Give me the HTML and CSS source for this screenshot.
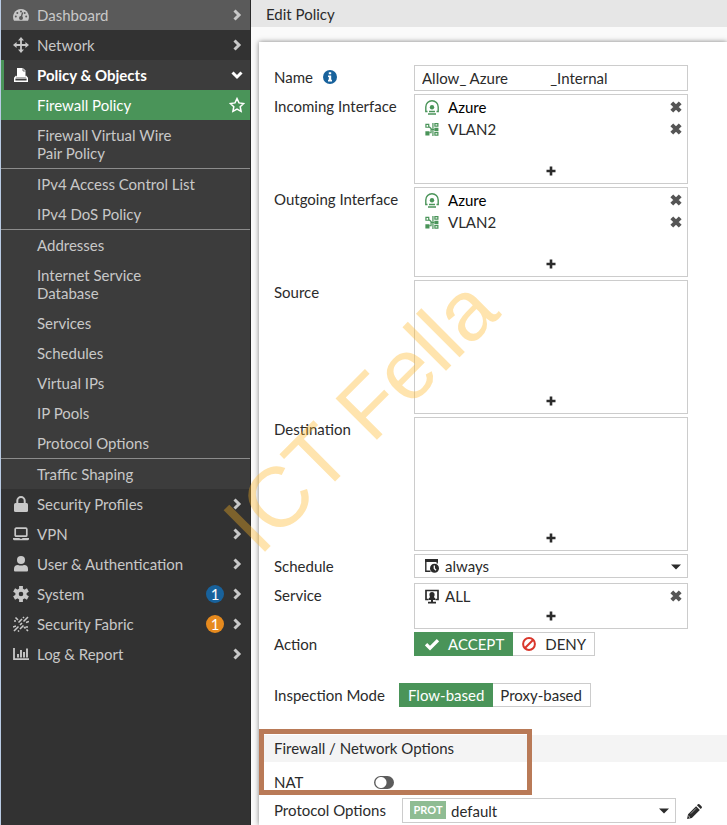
FILE: index.html
```html
<!DOCTYPE html>
<html lang="en">
<head>
<meta charset="utf-8">
<meta name="viewport" content="width=device-width, initial-scale=1">
<title>Edit Policy</title>
<link rel="stylesheet" href="styles.css">
</head>
<body>
<svg class="defs" aria-hidden="true">
  <symbol id="chevron" viewBox="0 0 10 12"><path d="M2.5 1.500 7 6l-4.500 4.500" fill="none" stroke="currentColor" stroke-width="3"/></symbol>
  <symbol id="chevron-down" viewBox="0 0 12 10"><path d="M1.500 2.500 6 7l4.500-4.500" fill="none" stroke="currentColor" stroke-width="3"/></symbol>
  <symbol id="cross" viewBox="0 0 12 12"><path d="M1.800 1.800l8.400 8.400M10.200 1.800l-8.400 8.400" fill="none" stroke="currentColor" stroke-width="4"/></symbol>
  <symbol id="plus" viewBox="0 0 10 10"><path d="M5 .5v9M.5 5h9" fill="none" stroke="currentColor" stroke-width="2.600"/></symbol>
  <symbol id="caret" viewBox="0 0 10 6"><path d="M0 .5h10L5 5.500z" fill="currentColor"/></symbol>
  <symbol id="tunnel" viewBox="0 0 14 15"><g fill="none" stroke="currentColor" stroke-width="1.400"><path d="M2.500 11.500H.8V7a6.200 6.200 0 0 1 12.400 0v4.500h-1.700"/><path d="M4 11.500h6M3 14h8"/></g><circle cx="7" cy="7.200" r="2.200" fill="currentColor"/></symbol>
  <symbol id="vlan" viewBox="0 0 15 14"><g fill="none" stroke="currentColor" stroke-width="1.300"><path d="M1 1.600h3v3H1zM10.600.8h3.200v2.600h-3.200zM10.600 10.400h3.200V13h-3.200z"/><path d="M4.500 4 7 6.500M4.500 10.500H6.500V7H10M8.500 0v14"/></g><path d="M.4 9h4.400v4.400H.4zM10 5h4.400v4H10z" fill="currentColor"/></symbol>
</svg>

<div class="app">
  <nav class="sidebar" aria-label="Main">
    <a class="item item-hover" href="#">
      <svg class="icon" viewBox="0 0 16 16"><path d="M8 2a8 8 0 0 0-7 11.800h14A8 8 0 0 0 8 2z" fill="currentColor"/><g fill="#5a5a5a"><circle cx="8" cy="4.500" r="1"/><circle cx="4.300" cy="6" r="1"/><circle cx="2.800" cy="9.600" r="1"/><circle cx="11.700" cy="6" r="1"/><circle cx="13.200" cy="9.600" r="1"/><circle cx="8" cy="11" r="2"/></g><path d="M8 11 9.600 5.500" stroke="#5a5a5a" stroke-width="1.300"/></svg>
      <span class="label">Dashboard</span><svg class="chev"><use href="#chevron"/></svg></a>
    <a class="item" href="#">
      <svg class="icon" viewBox="0 0 16 16"><path d="M8 2v12M2 8h12" stroke="currentColor" stroke-width="1.800"/><path d="M8 0l3 3.600H5zM8 16l3-3.600H5zM0 8l3.600-3v6zM16 8l-3.600-3v6z" fill="currentColor"/></svg>
      <span class="label">Network</span><svg class="chev"><use href="#chevron"/></svg></a>
    <div class="group">
      <a class="item item-open" href="#">
        <svg class="icon" viewBox="0 0 16 16"><path d="M4 1h6l2.500 2.500V10H4z" fill="currentColor"/><path d="M10 1v3h2.500" fill="none" stroke="#3c3c3c" stroke-width=".7"/><path d="M3.500 9 1.700 11v3.200h12.600V11L12.500 9" fill="none" stroke="currentColor" stroke-width="1.400"/><path d="M2 11h12" stroke="currentColor" stroke-width="1.200"/></svg>
        <span class="label">Policy &amp; Objects</span><svg class="chev-down"><use href="#chevron-down"/></svg></a>
      <a class="item sub item-current" href="#" aria-current="page"><span class="label">Firewall Policy</span>
        <svg class="icon" viewBox="0 0 16 16"><path d="M8 1.600l2 4.300 4.700.6-3.500 3.200.9 4.700L8 12.100l-4.100 2.300.9-4.700L1.300 6.500 6 5.900z" fill="none" stroke="currentColor" stroke-width="1.500"/></svg></a>
      <a class="item sub" href="#"><span class="label">Firewall Virtual Wire<br>Pair Policy</span></a>
      <a class="item sub ruled" href="#"><span class="label">IPv4 Access Control List</span></a>
      <a class="item sub" href="#"><span class="label">IPv4 DoS Policy</span></a>
      <a class="item sub ruled" href="#"><span class="label">Addresses</span></a>
      <a class="item sub" href="#"><span class="label">Internet Service<br>Database</span></a>
      <a class="item sub" href="#"><span class="label">Services</span></a>
      <a class="item sub" href="#"><span class="label">Schedules</span></a>
      <a class="item sub" href="#"><span class="label">Virtual IPs</span></a>
      <a class="item sub" href="#"><span class="label">IP Pools</span></a>
      <a class="item sub" href="#"><span class="label">Protocol Options</span></a>
      <a class="item sub ruled" href="#"><span class="label">Traffic Shaping</span></a>
    </div>
    <a class="item" href="#">
      <svg class="icon" viewBox="0 0 16 16"><path d="M4.300 8V4.700a3.700 3.700 0 0 1 7.400 0V8" fill="none" stroke="currentColor" stroke-width="2"/><rect x="1" y="7" width="14" height="9" rx="1.500" fill="currentColor"/></svg>
      <span class="label">Security Profiles</span><svg class="chev"><use href="#chevron"/></svg></a>
    <a class="item" href="#">
      <svg class="icon" viewBox="0 0 16 16"><rect x="2.200" y="2.200" width="11.600" height="8" rx="1" fill="none" stroke="currentColor" stroke-width="1.700"/><path d="M0 12h6.500l.5.800h2l.5-.8H16v.8a1.500 1.500 0 0 1-1.500 1.500h-13A1.500 1.500 0 0 1 0 12.800z" fill="currentColor"/></svg>
      <span class="label">VPN</span><svg class="chev"><use href="#chevron"/></svg></a>
    <a class="item" href="#">
      <svg class="icon" viewBox="0 0 16 16"><circle cx="8" cy="4" r="4" fill="currentColor"/><path d="M1 14.500V13a4 4 0 0 1 4-4c2 .8 4 .8 6 0a4 4 0 0 1 4 4v1.500a1 1 0 0 1-1 1H2a1 1 0 0 1-1-1z" fill="currentColor"/></svg>
      <span class="label">User &amp; Authentication</span><svg class="chev"><use href="#chevron"/></svg></a>
    <a class="item" href="#">
      <svg class="icon" viewBox="0 0 16 16"><circle cx="8" cy="8" r="4" fill="none" stroke="currentColor" stroke-width="3.400"/><path d="M8 0v3M8 13v3M1.100 4l2.600 1.500M12.300 10.500l2.600 1.500M1.100 12l2.600-1.500M12.300 5.500 14.900 4" stroke="currentColor" stroke-width="3.800"/></svg>
      <span class="label">System</span><span class="badge badge-blue">1</span><svg class="chev"><use href="#chevron"/></svg></a>
    <a class="item" href="#">
      <svg class="icon" viewBox="0 0 16 16"><path d="M1 15 5.500 10.500M7 9l2-2M10.500 5.500 15 1M5.500 6.500 9 3M10 2l1-1M1 5h2M2.500 1.500l2.500 2.500M0 11l3-1M7 13l3.500-3.500M5 15.500l1-1M11 11l1.500 1.500M13.500 13.500 15 15M13 6.500l3-1M12.500 11H15" fill="none" stroke="currentColor" stroke-width="1.600"/></svg>
      <span class="label">Security Fabric</span><span class="badge badge-orange">1</span><svg class="chev"><use href="#chevron"/></svg></a>
    <a class="item" href="#">
      <svg class="icon" viewBox="0 0 16 16"><path d="M1 2v11.200h15" fill="none" stroke="currentColor" stroke-width="1.800"/><path d="M5 11.500V8M8 11.500V4M11 11.500V6M14 11.500V2.500" stroke="currentColor" stroke-width="1.900"/></svg>
      <span class="label">Log &amp; Report</span><svg class="chev"><use href="#chevron"/></svg></a>
  </nav>

  <main class="main">
    <h1 class="title">Edit Policy</h1>
    <form class="panel">
      <div class="row">
        <label class="name" for="policy-name">Name
          <svg class="info" viewBox="0 0 14 14"><circle cx="7" cy="7" r="7" fill="#18629c"/><path d="M5.800 2.200h2.400v2H5.800zM5 5.500h3.200v4.300H9V11.400H5V9.800h.8V7H5z" fill="#fff"/></svg></label>
        <input class="field text" id="policy-name" type="text" value="Allow_&nbsp;Azure&nbsp;&nbsp;&nbsp;&nbsp;&nbsp;&nbsp;&nbsp;&nbsp;&nbsp;&nbsp;&nbsp;_Internal">
      </div>
      <div class="row">
        <span class="name">Incoming Interface</span>
        <div class="field list list-medium">
          <div class="entry"><svg class="entry-icon green"><use href="#tunnel"/></svg><span class="label strong">Azure</span><button class="remove" type="button" aria-label="Remove"><svg><use href="#cross"/></svg></button></div>
          <div class="entry"><svg class="entry-icon green"><use href="#vlan"/></svg><span class="label">VLAN2</span><button class="remove" type="button" aria-label="Remove"><svg><use href="#cross"/></svg></button></div>
          <button class="add" type="button" aria-label="Add"><svg><use href="#plus"/></svg></button>
        </div>
      </div>
      <div class="row">
        <span class="name">Outgoing Interface</span>
        <div class="field list list-medium">
          <div class="entry"><svg class="entry-icon green"><use href="#tunnel"/></svg><span class="label strong">Azure</span><button class="remove" type="button" aria-label="Remove"><svg><use href="#cross"/></svg></button></div>
          <div class="entry"><svg class="entry-icon green"><use href="#vlan"/></svg><span class="label">VLAN2</span><button class="remove" type="button" aria-label="Remove"><svg><use href="#cross"/></svg></button></div>
          <button class="add" type="button" aria-label="Add"><svg><use href="#plus"/></svg></button>
        </div>
      </div>
      <div class="row">
        <span class="name">Source</span>
        <div class="field list list-tall"><button class="add" type="button" aria-label="Add"><svg><use href="#plus"/></svg></button></div>
      </div>
      <div class="row">
        <span class="name">Destination</span>
        <div class="field list list-tall"><button class="add" type="button" aria-label="Add"><svg><use href="#plus"/></svg></button></div>
      </div>
      <div class="row row-schedule">
        <label class="name" for="schedule">Schedule</label>
        <div class="field select">
          <svg class="select-icon" viewBox="0 0 14 14"><path d="M5.500 12.300H.8V1h11.400v3.500" fill="none" stroke="currentColor" stroke-width="1.400"/><path d="M0 0h13v3H0z" fill="currentColor"/><circle cx="9.500" cy="9.300" r="4.500" fill="currentColor"/><path d="M9.300 6.500v3l1.700 1.700" fill="none" stroke="#fff" stroke-width="1.300"/></svg>
          <select id="schedule"><option>always</option></select>
          <svg class="caret"><use href="#caret"/></svg>
        </div>
      </div>
      <div class="row">
        <span class="name">Service</span>
        <div class="field list">
          <div class="entry entry-service"><svg class="entry-icon" viewBox="0 0 14 14"><path d="M3.500 10H1V1h12v9h-2.500" fill="none" stroke="currentColor" stroke-width="1.700"/><path d="M7 2.600a2.600 2.600 0 0 1 2.600 2.600c0 1.200-.6 1.900-.6 2.600 1 .6 1.500 1.200 1.500 2.700H8v1.800h3V14H3v-1.700h3v-1.800H3.500c0-1.500.5-2.100 1.500-2.700 0-.7-.6-1.400-.6-2.600A2.600 2.600 0 0 1 7 2.600z" fill="currentColor"/></svg><span class="label">ALL</span><button class="remove" type="button" aria-label="Remove"><svg><use href="#cross"/></svg></button></div>
          <button class="add" type="button" aria-label="Add"><svg><use href="#plus"/></svg></button>
        </div>
      </div>
      <div class="row row-action">
        <span class="name">Action</span>
        <div class="segments">
          <button class="on with-icon" type="button" aria-pressed="true"><svg viewBox="0 0 14 12"><path d="M1 6.200l4 4 8-8" fill="none" stroke="currentColor" stroke-width="3.400"/></svg>ACCEPT</button>
          <button class="with-icon" type="button" aria-pressed="false"><svg class="deny" viewBox="0 0 14 14"><circle cx="7" cy="7" r="5.900" fill="none" stroke="currentColor" stroke-width="2"/><path d="M3 11l8-8" stroke="currentColor" stroke-width="2"/></svg>DENY</button>
        </div>
      </div>
      <div class="row row-mode">
        <span class="name">Inspection Mode</span>
        <div class="segments">
          <button class="on" type="button" aria-pressed="true">Flow-based</button>
          <button type="button" aria-pressed="false">Proxy-based</button>
        </div>
      </div>

      <section class="options">
        <h2>Firewall / Network Options</h2>
        <div class="row row-nat">
          <label class="name" for="nat">NAT</label>
          <input class="toggle" id="nat" type="checkbox">
        </div>
        <div class="row row-protocol">
          <label class="name" for="protocol">Protocol Options</label>
          <div class="field select">
            <span class="prot">PROT</span>
            <select id="protocol"><option>default</option></select>
            <svg class="caret"><use href="#caret"/></svg>
          </div>
          <button class="edit" type="button" aria-label="Edit"><svg viewBox="0 0 14 14"><path d="M0 14l1-4.500L8.500 2 12 5.500 4.500 13zM9.300 1.200l.9-.9q.9-.6 1.700.2l1.600 1.600q.8.800.2 1.700l-.9.900z" fill="currentColor"/><path d="M3.500 9 8.500 4" stroke="#fff" stroke-width=".5"/><path d="M1.300 11.200l1.500 1.500" stroke="#fff" stroke-width=".8"/></svg></button>
        </div>
        <div class="highlight"></div>
      </section>
    </form>
  </main>
</div>
<div class="watermark" aria-hidden="true">ICT Fella</div>
</body>
</html>
```

FILE: styles.css
```css
* { box-sizing: border-box; }

body {
  margin: 0;
  overflow: hidden;
  background: #fafafa;
  color: #2b2b2b;
  font: 15px/18px Lato, "Liberation Sans", sans-serif;
}

button, input, select { font: inherit; color: inherit; margin: 0; }
button { background: none; border: 0; padding: 0; }
svg { display: block; flex: none; }
.defs { position: absolute; width: 0; height: 0; }

.app { display: flex; min-height: 100vh; }

/* Sidebar */
.sidebar {
  flex: none;
  width: 251px;
  background: #323232;
  border-left: 1px solid #b9cbe4;
  border-right: 1px solid #2a2a2a;
}
.group { background: #3c3c3c; }
.item {
  display: flex;
  align-items: center;
  gap: 8px;
  padding: 6px 5px 6px 12px;
  color: #c8c8c8;
  text-decoration: none;
}
.item-hover { background: #5a5a5a; }
.item-open {
  padding-left: 9px;
  border-left: 3px solid #4a9459;
  color: #fff;
  font-weight: bold;
}
.sub { padding-left: 36px; }
.item-current { background: #4a9459; color: #fff; }
.ruled { border-top: 1px solid #8c8c8c; }
.label { flex: 1; }
.icon { width: 16px; height: 16px; }
.chev { width: 10px; height: 12px; margin-right: 3px; }
.chev-down { width: 12px; height: 10px; margin-right: 2px; }
.badge {
  width: 18px;
  height: 18px;
  border-radius: 50%;
  color: #fff;
  text-align: center;
}
.badge-blue { background: #18629c; }
.badge-orange { background: #e68a1e; }

/* Main area */
.main { flex: 1; min-width: 0; }
.title {
  margin: 0;
  padding: 5px 15px 4px;
  background: #e6e6e6;
  font: inherit;
}
.panel {
  margin: 15px 0 0 8px;
  padding-top: 23px;
  min-height: calc(100vh - 42px);
  background: #fff;
  box-shadow: 0 0 5px rgba(0, 0, 0, .5);
}
.row {
  display: flex;
  align-items: flex-start;
  margin-bottom: 3px;
  padding: 0 39px 0 15px;
}
.name { flex: none; display: flex; width: 140px; padding-top: 3px; }
.info { width: 14px; height: 14px; margin: 2px 0 0 10px; }

.field {
  flex: 1;
  min-width: 0;
  border: 1px solid #ccc;
  background: #fff;
}
.text { height: 26px; padding: 0 7px; border-radius: 0; }

.list { display: flex; flex-direction: column; padding-top: 1px; }
.list-medium { min-height: 90px; }
.list-tall { min-height: 134px; }
.entry { display: flex; align-items: center; gap: 9px; height: 22px; padding: 0 5px 0 10px; }
.entry-service { gap: 6px; }
.entry-icon { width: 14px; height: 15px; }
.green { color: #4a9459; }
.strong { color: #000; }
.remove { color: #555; }
.remove svg { width: 12px; height: 12px; }
.add { margin-top: auto; padding: 4px 0 7px; }
.add svg { width: 10px; height: 10px; margin: 0 auto; }

.select { position: relative; height: 24px; }
.select select {
  appearance: none;
  display: block;
  width: 100%;
  height: 100%;
  padding: 0 24px 0 30px;
  border: 0;
  border-radius: 0;
  background: transparent;
}
.select-icon { position: absolute; left: 10px; top: 4px; width: 14px; height: 14px; pointer-events: none; }
.caret { position: absolute; right: 6px; top: 9px; width: 10px; height: 6px; pointer-events: none; }
.row-schedule { margin-bottom: 5px; }

.segments { display: flex; }
.segments button {
  display: flex;
  align-items: center;
  height: 24px;
  padding: 0 8px 0 7px;
  border: 1px solid #ccc;
  border-left: 0;
}
.segments .on { background: #4a9459; border-color: #4a9459; color: #fff; padding-left: 9px; }
.segments .with-icon { gap: 9px; }
.segments .with-icon svg { width: 14px; height: 14px; margin-left: 2px; }
.segments .deny { color: #d9362b; }
.row-action { margin-bottom: 27px; }
.row-mode { margin-bottom: 28px; }
.row-mode .name { width: 125px; }

.options { position: relative; }
.options h2 { margin: 0; padding: 4px 15px 5px; background: #f4f4f4; font: inherit; }
.row-nat { align-items: center; margin-bottom: 7px; padding-top: 8px; }
.row-nat .name { width: 100px; }
.toggle {
  appearance: none;
  width: 20px;
  height: 13px;
  margin-top: 3px;
  border-radius: 7px;
  background: radial-gradient(circle at 7px 50%, #fff 5px, #5c5c5c 6px);
}
.row-protocol { padding-right: 25px; }
.row-protocol .name { width: 128px; }
.row-protocol .select { height: 25px; }
.row-protocol select { padding-left: 48px; }
.prot {
  position: absolute;
  left: 7px;
  top: 2px;
  width: 36px;
  background: #8fbc93;
  color: #fff;
  font-size: 11px;
  font-weight: bold;
  text-align: center;
  pointer-events: none;
}
.edit { margin: 6px 0 0 11px; }
.edit svg { width: 15px; height: 15px; }
.highlight {
  position: absolute;
  left: 0;
  top: -6px;
  width: 273px;
  height: 66px;
  border: 5px solid #b97a57;
  pointer-events: none;
}

.watermark {
  position: absolute;
  left: 360px;
  top: 415px;
  transform: translate(-50%, -50%) rotate(-45deg);
  color: rgba(255, 183, 36, .37);
  font: 85px/1 "Liberation Sans", Arial, sans-serif;
  white-space: nowrap;
  pointer-events: none;
}
```
